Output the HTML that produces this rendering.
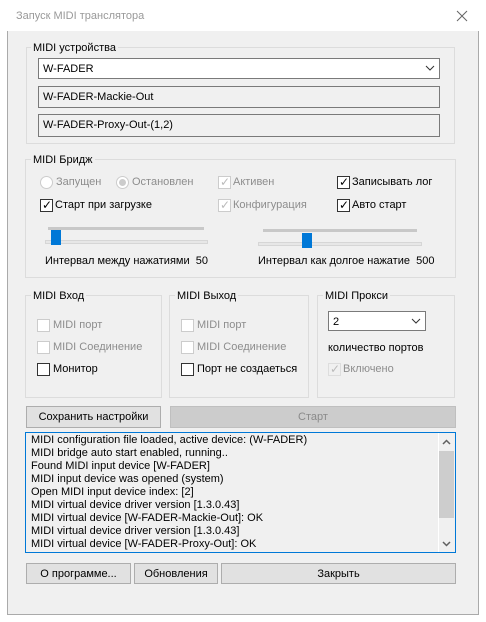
<!DOCTYPE html>
<html><head><meta charset="utf-8"><style>
*{box-sizing:border-box;margin:0;padding:0}
body{width:486px;height:622px;background:#fff;position:relative;overflow:hidden;font-family:"Liberation Sans",sans-serif;font-size:11px;color:#000}
.a{position:absolute;white-space:nowrap}
.win{left:7px;top:0;width:472px;height:615px;border:1px solid #aaa;border-top:none;background:#f0f0f0}
.title{left:7px;top:0;width:472px;height:31px;background:#fff}
.grp{border:1px solid #dcdcdc}
.lbl{background:#f0f0f0;padding:0 2px}
.box{border:1px solid #7a7a7a;padding:4px 0 0 4px}
.cb{width:13px;height:13px;border:1px solid #333;background:#fff}
.cbd{width:13px;height:13px;border:1px solid #ccc;background:#fff}
.gray{color:#8d8d8d}
.btn{border:1px solid #adadad;background:#e1e1e1;text-align:center;padding-top:4px}
.chk{position:absolute;left:1px;top:-2px;font-size:12px}
</style></head><body>
<div class="a win"></div>
<div class="a title"></div>
<div class="a" style="left:16px;top:10px;color:#999;font-size:11px">Запуск MIDI транслятора</div>
<svg class="a" style="left:456px;top:10px" width="12" height="12"><path d="M1 1L11 11M11 1L1 11" stroke="#666" stroke-width="1"/></svg>

<div class="a grp" style="left:26px;top:47px;width:429px;height:97px"></div>
<div class="a lbl" style="left:31px;top:42px">MIDI устройства</div>
<div class="a box" style="left:38px;top:58px;width:402px;height:21px;background:#fff">W-FADER</div>
<svg class="a" style="left:425px;top:65px" width="10" height="6"><path d="M1 1L5 5L9 1" stroke="#333" fill="none"/></svg>
<div class="a box" style="left:38px;top:86px;width:402px;height:22px">W-FADER-Mackie-Out</div>
<div class="a box" style="left:38px;top:114px;width:402px;height:23px">W-FADER-Proxy-Out-(1,2)</div>

<div class="a grp" style="left:25px;top:159px;width:431px;height:119px"></div>
<div class="a lbl" style="left:31px;top:154px">MIDI Бридж</div>
<div class="a" style="left:40px;top:176px;width:13px;height:13px;border:1px solid #ccc;border-radius:50%;background:#fff"></div>
<div class="a gray" style="left:56px;top:176px">Запущен</div>
<div class="a" style="left:116px;top:176px;width:13px;height:13px;border:1px solid #ccc;border-radius:50%;background:#fff"><div style="margin:2px;width:7px;height:7px;border-radius:50%;background:#ccc"></div></div>
<div class="a gray" style="left:132px;top:176px">Остановлен</div>
<div class="a cbd" style="left:218px;top:176px"><span class="chk" style="color:#bbb">✓</span></div>
<div class="a gray" style="left:233px;top:176px">Активен</div>
<div class="a cb" style="left:337px;top:176px"><span class="chk">✓</span></div>
<div class="a" style="left:352px;top:176px">Записывать лог</div>
<div class="a cb" style="left:40px;top:199px"><span class="chk">✓</span></div>
<div class="a" style="left:55px;top:199px">Старт при загрузке</div>
<div class="a cbd" style="left:218px;top:199px"><span class="chk" style="color:#bbb">✓</span></div>
<div class="a gray" style="left:233px;top:199px">Конфигурация</div>
<div class="a cb" style="left:337px;top:199px"><span class="chk">✓</span></div>
<div class="a" style="left:352px;top:199px">Авто старт</div>

<div class="a" style="left:48px;top:227px;width:156px;height:3px;background:#c8c8c8"></div>
<div class="a" style="left:45px;top:240px;width:163px;height:4px;background:#e7e7e7;border:1px solid #d6d6d6"></div>
<div class="a" style="left:51px;top:230px;width:10px;height:15px;background:#0078d7"></div>
<div class="a" style="left:263px;top:229px;width:154px;height:3px;background:#c8c8c8"></div>
<div class="a" style="left:258px;top:242px;width:164px;height:4px;background:#e7e7e7;border:1px solid #d6d6d6"></div>
<div class="a" style="left:302px;top:233px;width:10px;height:15px;background:#0078d7"></div>
<div class="a" style="left:45px;top:255px">Интервал между нажатиями&nbsp; 50</div>
<div class="a" style="left:258px;top:255px">Интервал как долгое нажатие&nbsp; 500</div>

<div class="a grp" style="left:25px;top:295px;width:137px;height:103px"></div>
<div class="a lbl" style="left:31px;top:290px">MIDI Вход</div>
<div class="a grp" style="left:169px;top:295px;width:140px;height:103px"></div>
<div class="a lbl" style="left:175px;top:290px">MIDI Выход</div>
<div class="a grp" style="left:317px;top:295px;width:138px;height:103px"></div>
<div class="a lbl" style="left:323px;top:290px">MIDI Прокси</div>

<div class="a cbd" style="left:37px;top:319px"></div><div class="a gray" style="left:53px;top:319px">MIDI порт</div>
<div class="a cbd" style="left:37px;top:341px"></div><div class="a gray" style="left:53px;top:341px">MIDI Соединение</div>
<div class="a cb" style="left:37px;top:363px"></div><div class="a" style="left:53px;top:363px">Монитор</div>
<div class="a cbd" style="left:181px;top:319px"></div><div class="a gray" style="left:197px;top:319px">MIDI порт</div>
<div class="a cbd" style="left:181px;top:341px"></div><div class="a gray" style="left:197px;top:341px">MIDI Соединение</div>
<div class="a cb" style="left:181px;top:363px"></div><div class="a" style="left:197px;top:363px">Порт не создаеться</div>
<div class="a box" style="left:328px;top:311px;width:98px;height:20px;background:#fff">2</div>
<svg class="a" style="left:411px;top:318px" width="10" height="6"><path d="M1 1L5 5L9 1" stroke="#333" fill="none"/></svg>
<div class="a" style="left:328px;top:342px">количество портов</div>
<div class="a cbd" style="left:328px;top:363px;border-color:#ddd;background:transparent"><span class="chk" style="color:#bbb">✓</span></div>
<div class="a gray" style="left:343px;top:363px">Включено</div>

<div class="a btn" style="left:26px;top:406px;width:135px;height:22px">Сохранить настройки</div>
<div class="a btn" style="left:170px;top:406px;width:286px;height:22px;background:#cccccc;border-color:#bfbfbf;color:#8a8a8a">Старт</div>

<div class="a" style="left:25px;top:432px;width:431px;height:121px;border:1px solid #0078d7;background:#f0f0f0;overflow:hidden">
<div style="position:absolute;left:5px;top:1px;line-height:13px">MIDI configuration file loaded, active device: (W-FADER)<br>MIDI bridge auto start enabled, running..<br>Found MIDI input device [W-FADER]<br>MIDI input device was opened (system)<br>Open MIDI input device index: [2]<br>MIDI virtual device driver version [1.3.0.43]<br>MIDI virtual device [W-FADER-Mackie-Out]: OK<br>MIDI virtual device driver version [1.3.0.43]<br>MIDI virtual device [W-FADER-Proxy-Out]: OK</div>
<div style="position:absolute;right:0;top:0;width:17px;height:119px;background:#f0f0f0;border-left:1px solid #fff"></div>
<div style="position:absolute;right:1px;top:18px;width:15px;height:67px;background:#cdcdcd"></div>
<svg style="position:absolute;right:4px;top:6px" width="9" height="6"><path d="M1 5L4.5 1.5L8 5" stroke="#606060" stroke-width="1.5" fill="none"/></svg>
<svg style="position:absolute;right:4px;top:108px" width="9" height="6"><path d="M1 1L4.5 4.5L8 1" stroke="#606060" stroke-width="1.5" fill="none"/></svg>
</div>

<div class="a btn" style="left:26px;top:563px;width:105px;height:21px">О программе...</div>
<div class="a btn" style="left:134px;top:563px;width:84px;height:21px">Обновления</div>
<div class="a btn" style="left:221px;top:563px;width:235px;height:21px">Закрыть</div>
</body></html>
